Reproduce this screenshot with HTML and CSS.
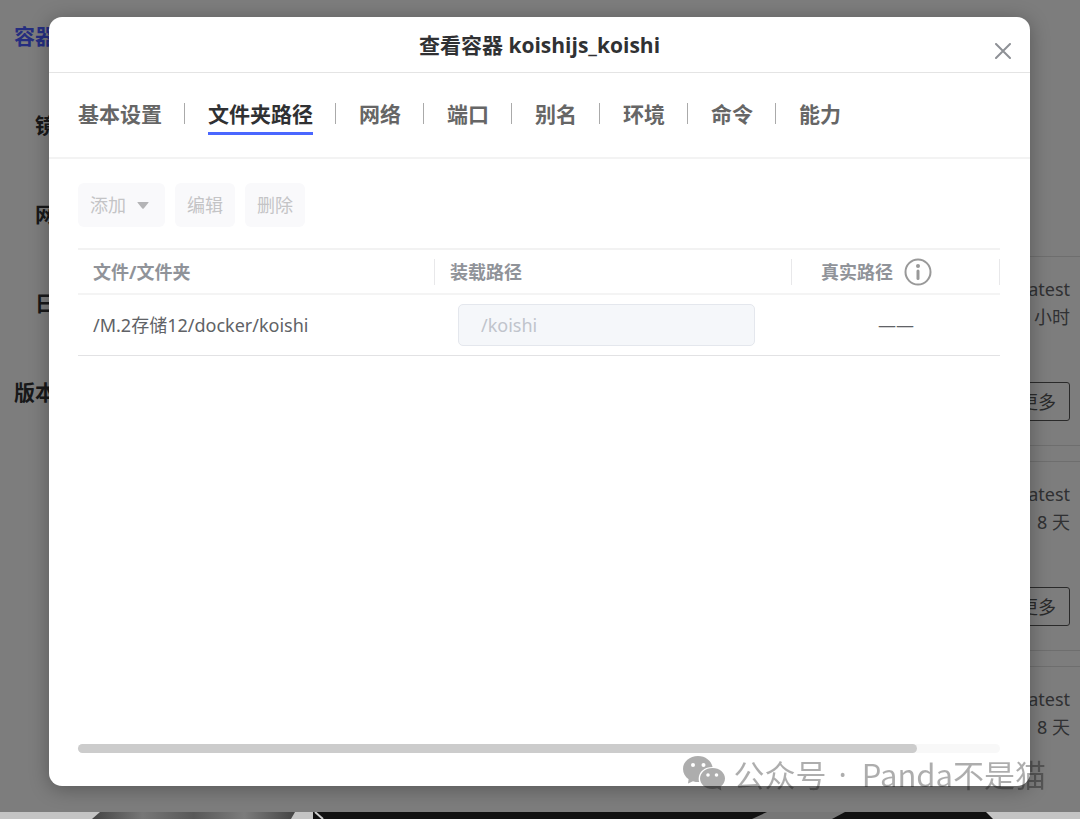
FILE: index.html
```html
<!DOCTYPE html>
<html lang="zh-CN">
<head>
  <meta charset="UTF-8">
  <title>查看容器 koishijs_koishi</title>
  <meta name="viewport" content="width=device-width, initial-scale=1.0">
  <link rel="stylesheet" href="styles.css">
</head>
<body>

  <div class="window">
    <div class="page">
      <nav class="sidebar">
        <a href="#" class="side-link active">容器</a>
        <a href="#" class="side-link sub">镜像</a>
        <a href="#" class="side-link sub">网络</a>
        <a href="#" class="side-link sub">日志</a>
        <a href="#" class="side-link">版本</a>
      </nav>

      <main class="container-list">
        <section class="card">
          <p>latest</p>
          <p>小时</p>
          <button type="button" class="more-btn">更多</button>
        </section>
        <section class="card">
          <p>latest</p>
          <p>8 天</p>
          <button type="button" class="more-btn">更多</button>
        </section>
        <section class="card">
          <p>latest</p>
          <p>8 天</p>
        </section>
      </main>
    </div>

    <div class="overlay">
      <div class="modal" role="dialog" aria-labelledby="modalTitle">
        <header class="modal-header">
          <h1 id="modalTitle">查看容器 koishijs_koishi</h1>
          <button type="button" class="close-btn" aria-label="关闭">
            <svg width="16" height="16" viewBox="0 0 16 16" fill="none" stroke="#8e9196" stroke-width="2" stroke-linecap="round">
              <path d="M1 1L15 15M15 1L1 15"/>
            </svg>
          </button>
        </header>

        <nav class="tabs">
          <button type="button" class="tab">基本设置</button>
          <button type="button" class="tab active">文件夹路径</button>
          <button type="button" class="tab">网络</button>
          <button type="button" class="tab">端口</button>
          <button type="button" class="tab">别名</button>
          <button type="button" class="tab">环境</button>
          <button type="button" class="tab">命令</button>
          <button type="button" class="tab">能力</button>
        </nav>

        <div class="modal-body">
          <div class="toolbar">
            <button type="button" class="tool-btn dropdown" disabled>添加
              <svg width="12" height="7" viewBox="0 0 12 7"><path d="M1 0H11Q12 0 11.400 .800L6.700 6.400Q6 7 5.300 6.400L.600 .800Q0 0 1 0Z" fill="#b4b4b6"/></svg>
            </button>
            <button type="button" class="tool-btn" disabled>编辑</button>
            <button type="button" class="tool-btn" disabled>删除</button>
          </div>

          <table class="path-table">
            <colgroup>
              <col class="col-path">
              <col class="col-path">
              <col>
            </colgroup>
            <thead>
              <tr>
                <th><div class="head-cell">文件/文件夹</div></th>
                <th><div class="head-cell" id="mountLabel">装载路径</div></th>
                <th>
                  <div class="head-cell real-path">
                    真实路径
                    <svg width="28" height="28" viewBox="0 0 28 28" fill="none">
                      <circle cx="14" cy="14" r="12.500" stroke="#999" stroke-width="2"/>
                      <circle cx="14" cy="8" r="2" fill="#999"/>
                      <path d="M14 13V20.500" stroke="#999" stroke-width="3" stroke-linecap="round"/>
                    </svg>
                  </div>
                </th>
              </tr>
            </thead>
            <tbody>
              <tr>
                <td>/M.2存储12/docker/koishi</td>
                <td class="input-cell"><input type="text" value="/koishi" aria-labelledby="mountLabel" disabled></td>
                <td class="center">——</td>
              </tr>
            </tbody>
          </table>

          <div class="scroll-track"><div class="scroll-thumb"></div></div>
        </div>
      </div>
    </div>
  </div>

  <div class="wallpaper">
    <svg width="100%" height="7" viewBox="0 0 1080 7" preserveAspectRatio="none">
      <defs>
        <linearGradient id="metal">
          <stop offset="0" stop-color="#444"/>
          <stop offset=".25" stop-color="#777"/>
          <stop offset=".5" stop-color="#585858"/>
          <stop offset=".75" stop-color="#7c7c7c"/>
          <stop offset="1" stop-color="#444"/>
        </linearGradient>
      </defs>
      <path d="M92 7L100 0H295L291 7Z" fill="url(#metal)"/>
      <path d="M313 0H986L993 7H313Z" fill="#111"/>
      <path d="M315 0L323 7" stroke="#ccc" stroke-width="2"/>
      <path d="M752 7L767 0H845L832 7Z" fill="#777"/>
    </svg>
  </div>

  <div class="watermark">
    <svg width="42" height="36" viewBox="0 0 42 36" fill="currentColor">
      <path fill-rule="evenodd" d="M15 0C6.700 0 0 5.600 0 13C0 17.200 2.200 20.800 5.600 23.200L5 27.500L10 25.200C12 25.900 14 26.200 16.200 26.100C15.800 24.700 15.600 23.500 15.700 22.200C16 15.800 21.600 11 29.600 11C28.300 4.700 22.400 0 15 0ZM10 7A2 2 0 1 1 10 11A2 2 0 1 1 10 7ZM20.500 7A2 2 0 1 1 20.500 11A2 2 0 1 1 20.500 7Z"/>
      <path fill-rule="evenodd" d="M29.500 12C22.500 12 17 16.700 17 22.500C17 28.300 22.500 33 29.500 33C31.200 33 32.800 32.700 34.300 32.200L38.300 34.500L37.600 30.500C40.300 28.600 42 25.700 42 22.500C42 16.700 36.500 12 29.500 12ZM25 17.200A1.800 1.800 0 1 1 25 20.800A1.800 1.800 0 1 1 25 17.200ZM33.500 17.200A1.800 1.800 0 1 1 33.500 20.800A1.800 1.800 0 1 1 33.500 17.200Z"/>
    </svg>
    <span>公众号</span>
    <span class="dot">·</span>
    <span>Panda不是猫</span>
  </div>

</body>
</html>
```
FILE: styles.css
```css
* {
  box-sizing: border-box;
}

body {
  margin: 0;
  min-height: 100vh;
  display: flex;
  flex-direction: column;
  font-family: 'Noto Sans', 'Noto Sans CJK SC', sans-serif;
  font-size: 18px;
  line-height: 28px;
  color: #606266;
  background-color: #c4c4c4;
  overflow: hidden;
}

button, input {
  font: inherit;
}

.window {
  position: relative;
  flex: 1;
  display: flex;
  background-color: #fbfbfb;
}

/* page under the dialog */
.page {
  flex: 1;
  display: flex;
  justify-content: space-between;
}

.sidebar {
  width: 160px;
  padding-top: 22px;
  display: flex;
  flex-direction: column;
  gap: 61px;
}

.side-link {
  padding-left: 14px;
  font-size: 21px;
  font-weight: bold;
  color: #303133;
  text-decoration: none;
}

.side-link.sub {
  padding-left: 35px;
}

.side-link.active {
  color: #4a5cff;
}

.container-list {
  width: 300px;
  padding-top: 256px;
  display: flex;
  flex-direction: column;
  gap: 15px;
}

.card {
  height: 190px;
  padding: 18px 10px 0 0;
  border-top: 1px solid #dcdcdc;
  border-bottom: 1px solid #dcdcdc;
  text-align: right;
}

.card:last-child {
  height: auto;
  border-bottom: none;
}

.card p {
  margin: 0;
}

.more-btn {
  height: 39px;
  margin-top: 51px;
  padding: 0 13px;
  border: 1px solid #555;
  border-radius: 3px;
  background: transparent;
  color: #555;
}

.overlay {
  position: absolute;
  inset: 0;
  padding: 17px 50px 26px 49px;
  display: flex;
  background-color: rgba(0, 0, 0, 0.5);
}

.modal {
  flex: 1;
  display: flex;
  flex-direction: column;
  border-radius: 13px;
  background-color: #fff;
  box-shadow: 0 3px 20px rgba(0, 0, 0, 0.3);
}

.modal-header {
  position: relative;
  height: 56px;
  display: flex;
  align-items: center;
  justify-content: center;
  border-bottom: 1px solid #e4e4e4;
}

.modal-header h1 {
  margin: 0;
  font-family: 'Open Sans', 'Noto Sans CJK SC', sans-serif;
  font-size: 21px;
  font-weight: bold;
  color: #303133;
}

.close-btn {
  position: absolute;
  right: 19px;
  top: 26px;
  padding: 0;
  border: none;
  background: transparent;
  line-height: 0;
  cursor: pointer;
}

.tabs {
  height: 86px;
  padding-left: 29px;
  display: flex;
  align-items: center;
  border-bottom: 2px solid #f3f3f3;
}

.tab {
  height: 40px;
  padding: 0;
  border: none;
  border-bottom: 3px solid transparent;
  background: transparent;
  font-size: 21px;
  font-weight: bold;
  color: #666;
  cursor: pointer;
}

.tab.active {
  color: #303133;
  border-bottom-color: #4a67ff;
}

.tab + .tab {
  position: relative;
  margin-left: 46px;
}

.tab + .tab::before {
  content: '';
  position: absolute;
  left: -24px;
  top: 8px;
  width: 1px;
  height: 21px;
  background-color: #aaa;
}

.modal-body {
  flex: 1;
  padding: 24px 30px 33px 29px;
  display: flex;
  flex-direction: column;
}

.toolbar {
  display: flex;
  gap: 10px;
}

.tool-btn {
  height: 44px;
  padding: 0 12px;
  border: none;
  border-radius: 6px;
  background-color: #f9f9fb;
  color: #c4c4c6;
}

.tool-btn.dropdown {
  padding-right: 16px;
  display: flex;
  align-items: center;
  gap: 11px;
}

.path-table {
  width: 100%;
  margin-top: 21px;
  border-collapse: separate;
  border-spacing: 0;
  table-layout: fixed;
  border-top: 2px solid #f2f2f2;
}

.col-path {
  width: 357px;
}

.path-table th {
  height: 45px;
  padding: 0;
  border-bottom: 2px solid #f4f4f4;
  color: #909399;
}

.head-cell {
  height: 26px;
  padding-left: 15px;
  display: flex;
  align-items: center;
  border-right: 1px solid #e8e8ea;
}

.head-cell.real-path {
  padding: 0 38px 0 0;
  justify-content: center;
  gap: 11px;
}

.path-table td {
  height: 61px;
  padding: 0 15px;
  border-bottom: 1px solid #e2e2e4;
}

.path-table .input-cell {
  padding: 0 37px 0 23px;
}

.path-table .center {
  text-align: center;
}

.input-cell input {
  display: block;
  width: 100%;
  height: 42px;
  padding: 0 22px;
  border: 1px solid #e4e7ed;
  border-radius: 5px;
  background-color: #f5f7fa;
  color: #c0c4cc;
}

.scroll-track {
  height: 9px;
  margin-top: auto;
  border-radius: 5px;
  background-color: #f8f8f8;
}

.scroll-thumb {
  width: 91%;
  height: 100%;
  border-radius: 5px;
  background-color: #ccc;
}

/* strip of desktop below the window */
.wallpaper {
  height: 7px;
  line-height: 0;
}

.watermark {
  position: fixed;
  right: 34px;
  bottom: 25px;
  display: flex;
  align-items: center;
  gap: 9px;
  font-family: 'Noto Sans CJK SC', sans-serif;
  font-size: 31px;
  line-height: 40px;
  color: rgba(0, 0, 0, 0.32);
}

.watermark .dot {
  padding: 0 6px 0 3px;
  font-family: 'Noto Sans', sans-serif;
}
```
